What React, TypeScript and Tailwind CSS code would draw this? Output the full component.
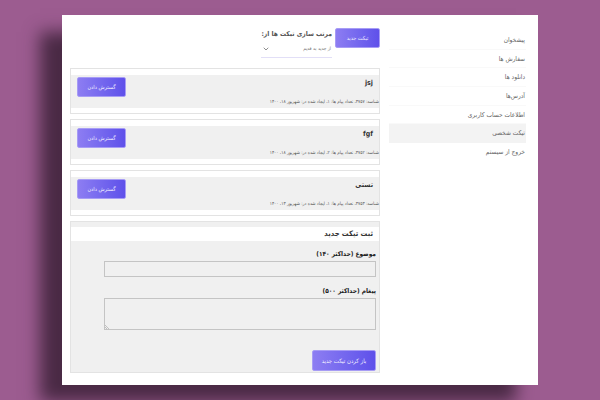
import { ChevronDown } from 'lucide-react';

const menuItems = ['پیشخوان', 'سفارش ها', 'دانلود ها', 'آدرس‌ها', 'اطلاعات حساب کاربری', 'تیکت شخصی', 'خروج از سیستم'];

const tickets = [
  { title: 'jsj', meta: 'شناسه: ۳۷۵۷، تعداد پیام ها: ۱، ایجاد شده در: شهریور ۱۸، ۱۴۰۰' },
  { title: 'fgf', meta: 'شناسه: ۳۷۵۲، تعداد پیام ها: ۲، ایجاد شده در: شهریور ۱۸، ۱۴۰۰' },
  { title: 'تستی', meta: 'شناسه: ۳۷۵۳، تعداد پیام ها: ۱، ایجاد شده در: شهریور ۱۳، ۱۴۰۰' },
];

const purple = 'rounded-[2px] border border-[#a79cf5] bg-gradient-to-r from-[#8d7df2] to-[#5f50ea] text-[#f0eeff]';

function TicketCard({ title, meta }: { title: string; meta: string }) {
  return (
    <div className="h-[46px] border border-[#e3e3e3] bg-white pt-[6px]">
      <div className="flex h-[33px] justify-between bg-[#f0f0f0] pr-[6px] pl-[6px] pt-[2px]">
        <div className="flex flex-1 flex-col justify-between pb-[3px]">
          <h3 className="pt-[1px] text-[7px] leading-[10px] font-bold text-[#333]">{title}</h3>
          <p className="-mr-[6px] text-[4.6px] leading-[7px] text-[#555]">{meta}</p>
        </div>
        <button type="button" className={`${purple} h-[20px] w-[49px] text-[5.5px]`}>
          گسترش دادن
        </button>
      </div>
    </div>
  );
}

export default function App() {
  return (
    <div className="h-[400px] w-[600px] overflow-hidden bg-[#9c5c90] pt-[15px] pl-[62px] font-['DejaVu_Sans_Condensed','DejaVu_Sans',sans-serif]">
      <div dir="rtl" className="flex h-[370px] w-[476px] bg-white pr-[12px] shadow-[-22px_17px_16px_#4a2a45]">
        <nav className="w-[137px] shrink-0 pt-[16px]">
          {menuItems.map((item) => (
            <a
              key={item}
              className={`block h-[18.7px] border-b pr-px text-[6.5px] leading-[18px] text-[#666] ${
                item === 'تیکت شخصی' ? 'border-transparent bg-[#f3f3f3]' : item === 'خروج از سیستم' ? 'border-transparent' : 'border-[#f9f9f9]'
              }`}
            >
              {item}
            </a>
          ))}
        </nav>

        <main className="mr-[9px] ml-[8px] flex-1 pt-[13px]">
          <div className="flex h-[40px] items-start gap-[3px]">
            <button type="button" className={`${purple} h-[20px] w-[45px] text-[5.5px]`}>
              تیکت جدید
            </button>
            <div className="w-[71px]">
              <p className="mt-[1px] text-[6.7px] leading-[11px] font-bold whitespace-nowrap text-[#555]">مرتب سازی تیکت ها از:</p>
              <div className="mt-[1px] flex h-[17px] items-center justify-between border-b border-[#e2dff7] px-[1px] text-[4.8px] text-[#777]">
                <span>از جدید به قدیم</span>
                <ChevronDown className="h-[8px] w-[8px] text-[#555]" aria-hidden="true" />
              </div>
            </div>
          </div>

          <div className="flex flex-col gap-[5px]">
            {tickets.map((ticket) => (
              <TicketCard key={ticket.title} title={ticket.title} meta={ticket.meta} />
            ))}

            <form className="h-[152px] border border-[#e3e3e3] bg-[#f0f0f0] pt-[5px]">
              <h2 className="h-[14px] bg-white pr-[6px] text-[7.5px] leading-[13px] font-bold text-[#333]">ثبت تیکت جدید</h2>
              <div className="px-[3px]">
                <label className="mt-[7px] block text-[6.5px] leading-[12px] font-bold text-[#222]">موضوع (حداکثر ۱۴۰)</label>
                <input className="mt-[1px] block h-[16px] w-[272px] border border-[#c4c4c4] bg-[#f0f0f0]" />
                <label className="mt-[8px] block text-[6.5px] leading-[12px] font-bold text-[#222]">پیغام (حداکثر ۵۰۰)</label>
                <div className="relative mt-[1px] w-[272px]">
                  <textarea className="block h-[32px] w-full resize-none border border-[#c4c4c4] bg-[#f0f0f0]" />
                  <svg className="absolute bottom-[1px] left-[1px] h-[5px] w-[5px]" viewBox="0 0 5 5" aria-hidden="true">
                    <path d="M0 1 4 5M0 3 2 5" stroke="#aaa" strokeWidth="0.7" fill="none" />
                  </svg>
                </div>
                <button type="button" className={`${purple} mt-[20px] block h-[21px] w-[64px] text-[6px]`}>
                  باز کردن تیکت جدید
                </button>
              </div>
            </form>
          </div>
        </main>
      </div>
    </div>
  );
}
